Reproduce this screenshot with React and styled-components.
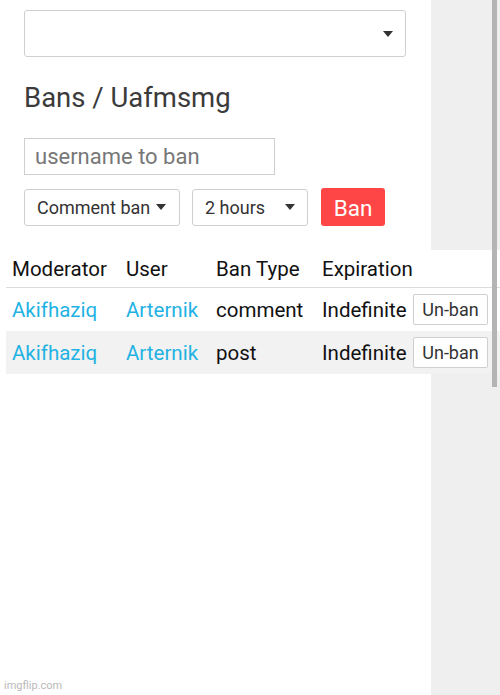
import styled, { createGlobalStyle } from 'styled-components';

const GlobalStyle = createGlobalStyle`
  html, body {
    margin: 0;
    padding: 0;
    background: #fff;
    font-family: Roboto, "Liberation Sans", Arial, sans-serif;
  }
`;

const Page = styled.div`
  display: flex;
  width: 500px;
  height: 695px;
  overflow: hidden;
  position: relative;
`;

const Main = styled.div`
  width: 431px;
  flex-shrink: 0;
  background: #fff;
  padding: 10px 0 0 24px;
  box-sizing: border-box;
`;

const Side = styled.div`
  flex: 1;
  background: #efefef;
  position: relative;
`;

const Scrollbar = styled.div`
  position: absolute;
  top: 0;
  right: 3px;
  width: 5px;
  height: 387px;
  background: #b4b4b4;
  z-index: 3;
`;

const SelectBox = styled.div`
  display: flex;
  align-items: center;
  justify-content: space-between;
  box-sizing: border-box;
  width: ${(p) => p.width}px;
  height: ${(p) => p.height || 37}px;
  border: 1px solid #cfcfcf;
  border-radius: 3px;
  padding: 0 ${(p) => p.padRight || 13}px 0 12px;
  font-size: 18px;
  color: #333;
  background: #fff;
`;

const Caret = styled.span`
  width: 0;
  height: 0;
  border-left: 5px solid transparent;
  border-right: 5px solid transparent;
  border-top: 6px solid #333;
`;

const Heading = styled.h1`
  margin: 25px 0 0;
  font-size: 27.5px;
  font-weight: 400;
  color: #3b3b3b;
  line-height: 32px;
`;

const TextInput = styled.div`
  box-sizing: border-box;
  width: 251px;
  height: 37px;
  margin-top: 24px;
  border: 1px solid #cfcfcf;
  padding: 0 10px;
  display: flex;
  align-items: center;
  font-size: 22px;
  color: #777;
`;

const Controls = styled.div`
  display: flex;
  align-items: center;
  gap: 12px;
  margin-top: 13px;
`;

const BanButton = styled.div`
  width: 64px;
  height: 38px;
  margin-left: 1px;
  border-radius: 3px;
  background: #ff4646;
  color: #fff;
  font-size: 22.5px;
  display: flex;
  align-items: center;
  justify-content: center;
  padding-top: 2px;
  box-sizing: border-box;
`;

const Table = styled.table`
  position: relative;
  z-index: 2;
  margin: 24px 0 0 -18px;
  width: 494px;
  table-layout: fixed;
  border-collapse: collapse;
  background: #fff;
  font-size: 20.5px;
  color: #111;
`;

const Col = styled.col`
  width: ${(p) => p.width}px;
`;

const Th = styled.th`
  text-align: left;
  font-weight: 400;
  height: 37px;
  padding: 0 6px;
  border-bottom: 1px solid #dcdcdc;
  white-space: nowrap;
`;

const Row = styled.tr`
  background: ${(p) => (p.striped ? '#f2f2f2' : '#fff')};
`;

const Td = styled.td`
  height: 43px;
  padding: 0 ${(p) => (p.tight ? 4 : 6)}px;
  white-space: nowrap;
  color: ${(p) => (p.link ? '#1fb2e3' : '#111')};
`;

const UnbanButton = styled.span`
  display: inline-block;
  box-sizing: border-box;
  width: 75px;
  height: 31px;
  line-height: 29px;
  text-align: center;
  border: 1px solid #cfcfcf;
  border-radius: 2px;
  background: #fff;
  font-size: 18px;
  color: #333;
  vertical-align: middle;
`;

const Watermark = styled.div`
  position: absolute;
  left: 4px;
  bottom: 3px;
  font-size: 11px;
  color: #b9b9b9;
`;

const bans = [
  { mod: 'Akifhaziq', user: 'Arternik', type: 'comment' },
  { mod: 'Akifhaziq', user: 'Arternik', type: 'post' },
];

function App() {
  return (
    <>
      <GlobalStyle />
      <Page>
        <Main>
          <SelectBox width={382} height={47} padRight={12}>
            <span />
            <Caret />
          </SelectBox>
          <Heading>Bans / Uafmsmg</Heading>
          <TextInput>username to ban</TextInput>
          <Controls>
            <SelectBox width={156}>
              Comment ban
              <Caret />
            </SelectBox>
            <SelectBox width={116} padRight={12}>
              2 hours
              <Caret />
            </SelectBox>
            <BanButton>Ban</BanButton>
          </Controls>
          <Table>
            <colgroup>
              <Col width={114} />
              <Col width={90} />
              <Col width={106} />
              <Col width={93} />
              <Col width={91} />
            </colgroup>
            <thead>
              <tr>
                <Th>Moderator</Th>
                <Th>User</Th>
                <Th>Ban Type</Th>
                <Th>Expiration</Th>
                <Th />
              </tr>
            </thead>
            <tbody>
              {bans.map((ban, i) => (
                <Row key={i} striped={i % 2 === 1}>
                  <Td link>{ban.mod}</Td>
                  <Td link>{ban.user}</Td>
                  <Td>{ban.type}</Td>
                  <Td>Indefinite</Td>
                  <Td tight>
                    <UnbanButton>Un-ban</UnbanButton>
                  </Td>
                </Row>
              ))}
            </tbody>
          </Table>
        </Main>
        <Side>
          <Scrollbar />
        </Side>
        <Watermark>imgflip.com</Watermark>
      </Page>
    </>
  );
}

export default App;
